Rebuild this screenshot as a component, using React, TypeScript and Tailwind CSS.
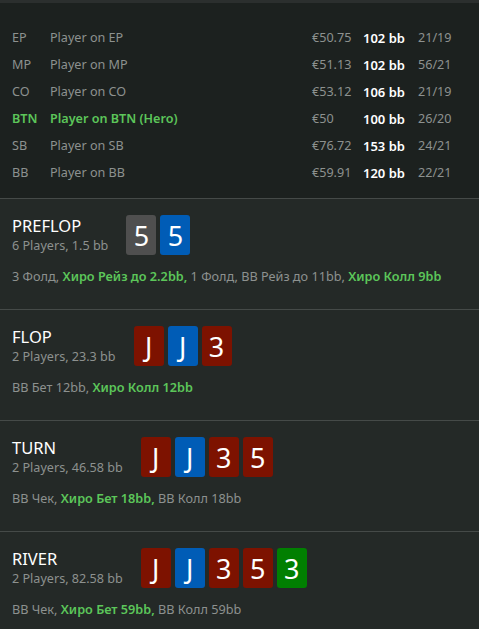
import React from 'react';

interface Player {
  pos: string;
  name: string;
  money: string;
  stack: string;
  ratio: string;
  hero?: boolean;
}

interface Card {
  rank: string;
  color: string;
}

interface Part {
  text: string;
  hero?: boolean;
}

interface Street {
  name: string;
  info: string;
  cards: Card[];
  actions: Part[];
}

const players: Player[] = [
  { pos: 'EP', name: 'Player on EP', money: '€50.75', stack: '102 bb', ratio: '21/19' },
  { pos: 'MP', name: 'Player on MP', money: '€51.13', stack: '102 bb', ratio: '56/21' },
  { pos: 'CO', name: 'Player on CO', money: '€53.12', stack: '106 bb', ratio: '21/19' },
  { pos: 'BTN', name: 'Player on BTN (Hero)', money: '€50', stack: '100 bb', ratio: '26/20', hero: true },
  { pos: 'SB', name: 'Player on SB', money: '€76.72', stack: '153 bb', ratio: '24/21' },
  { pos: 'BB', name: 'Player on BB', money: '€59.91', stack: '120 bb', ratio: '22/21' },
];

const red = 'bg-[#7d1200]';
const blue = 'bg-[#005cb6]';
const gray = 'bg-[#4f4f4f]';
const green = 'bg-[#017f01]';

const streets: Street[] = [
  {
    name: 'PREFLOP',
    info: '6 Players, 1.5 bb',
    cards: [
      { rank: '5', color: gray },
      { rank: '5', color: blue },
    ],
    actions: [
      { text: '3 Фолд, ' },
      { text: 'Хиро Рейз до 2.2bb,', hero: true },
      { text: ' 1 Фолд, BB Рейз до 11bb, ' },
      { text: 'Хиро Колл 9bb', hero: true },
    ],
  },
  {
    name: 'FLOP',
    info: '2 Players, 23.3 bb',
    cards: [
      { rank: 'J', color: red },
      { rank: 'J', color: blue },
      { rank: '3', color: red },
    ],
    actions: [{ text: 'BB Бет 12bb, ' }, { text: 'Хиро Колл 12bb', hero: true }],
  },
  {
    name: 'TURN',
    info: '2 Players, 46.58 bb',
    cards: [
      { rank: 'J', color: red },
      { rank: 'J', color: blue },
      { rank: '3', color: red },
      { rank: '5', color: red },
    ],
    actions: [
      { text: 'BB Чек, ' },
      { text: 'Хиро Бет 18bb,', hero: true },
      { text: ' BB Колл 18bb' },
    ],
  },
  {
    name: 'RIVER',
    info: '2 Players, 82.58 bb',
    cards: [
      { rank: 'J', color: red },
      { rank: 'J', color: blue },
      { rank: '3', color: red },
      { rank: '5', color: red },
      { rank: '3', color: green },
    ],
    actions: [
      { text: 'BB Чек, ' },
      { text: 'Хиро Бет 59bb,', hero: true },
      { text: ' BB Колл 59bb' },
    ],
  },
];

function StreetBlock({ street }: { street: Street }) {
  return (
    <div className="border-t border-[#454a48] bg-[#242927] px-3 pt-4 pb-6">
      <div className="flex items-center">
        <div className="flex flex-col">
          <div className="text-[16.5px] leading-[22px] text-white">{street.name}</div>
          <div className="text-[12.6px] leading-[18px] text-[#8d918f]">{street.info}</div>
        </div>
        <div className="ml-[18px] flex gap-1">
          {street.cards.map((c, i) => (
            <div
              key={i}
              className={`${c.color} flex h-10 w-[30px] items-center justify-center rounded-[3px] text-[27px] leading-none text-white`}
            >
              {c.rank}
            </div>
          ))}
        </div>
      </div>
      <div className="mt-3 text-[12.7px] leading-[18px] text-[#8d918f]">
        {street.actions.map((a, i) => (
          <span key={i} className={a.hero ? 'font-semibold text-[#5cc65a]' : ''}>
            {a.text}
          </span>
        ))}
      </div>
    </div>
  );
}

export default function App() {
  return (
    <div className="min-h-screen w-[479px] bg-[#242927] font-['Noto_Sans',sans-serif]">
      <div className="h-[3px] bg-[#2b2f2e]" />
      <div className="bg-[#1c211f] pt-[22px] pb-[11px] pl-3 text-[12.6px]">
        {players.map((p) => (
          <div
            key={p.pos}
            className="grid h-[27px] grid-cols-[38px_262px_51px_55px_1fr] items-center"
          >
            <span className={p.hero ? 'font-semibold text-[#5cc65a]' : 'text-[#8d918f]'}>{p.pos}</span>
            <span className={p.hero ? 'font-semibold text-[#5cc65a]' : 'text-[#8d918f]'}>{p.name}</span>
            <span className="text-[#8d918f]">{p.money}</span>
            <span className="text-[13px] font-semibold text-white">{p.stack}</span>
            <span className="text-[#8d918f]">{p.ratio}</span>
          </div>
        ))}
      </div>
      {streets.map((s) => (
        <StreetBlock key={s.name} street={s} />
      ))}
    </div>
  );
}
